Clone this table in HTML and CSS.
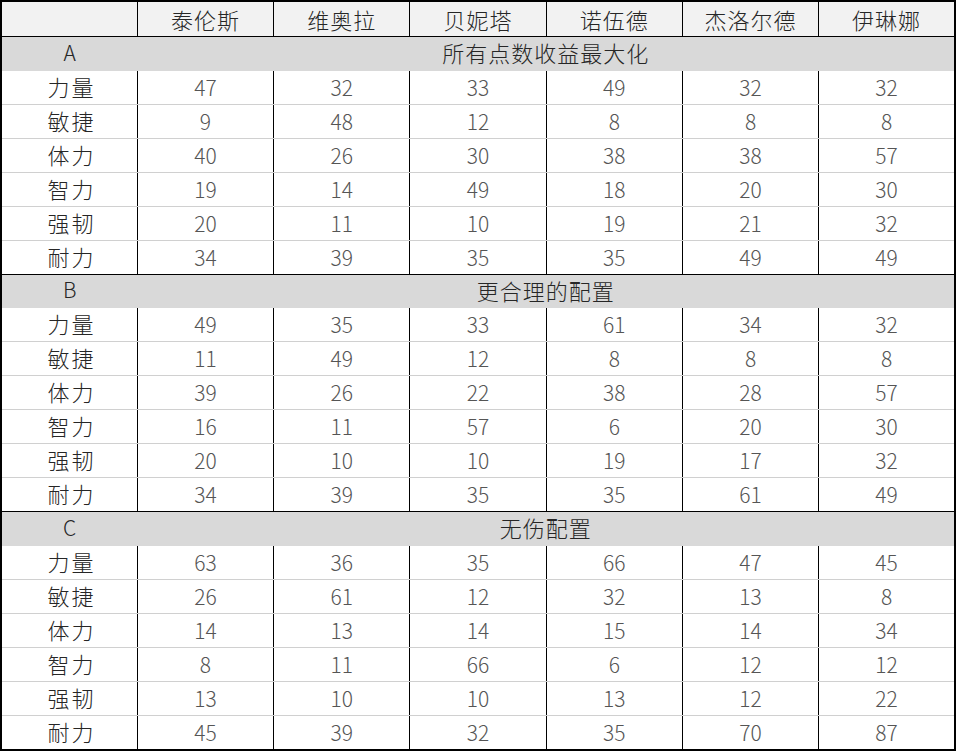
FILE: index.html
```html
<!DOCTYPE html>
<html lang="zh">
<head>
<meta charset="utf-8">
<title>属性配置</title>
<link rel="stylesheet" href="styles.css">
</head>
<body>
<table class="stats">
  <colgroup>
    <col><col><col><col><col><col><col>
  </colgroup>
  <tr class="head">
    <td></td><td>泰伦斯</td><td>维奥拉</td><td>贝妮塔</td><td>诺伍德</td><td>杰洛尔德</td><td>伊琳娜</td>
  </tr>
  <tr class="section"><td class="key">A</td><td colspan="6">所有点数收益最大化</td></tr>
  <tr class="row"><td class="lbl">力量</td><td>47</td><td>32</td><td>33</td><td>49</td><td>32</td><td>32</td></tr>
  <tr class="row"><td class="lbl">敏捷</td><td>9</td><td>48</td><td>12</td><td>8</td><td>8</td><td>8</td></tr>
  <tr class="row"><td class="lbl">体力</td><td>40</td><td>26</td><td>30</td><td>38</td><td>38</td><td>57</td></tr>
  <tr class="row"><td class="lbl">智力</td><td>19</td><td>14</td><td>49</td><td>18</td><td>20</td><td>30</td></tr>
  <tr class="row"><td class="lbl">强韧</td><td>20</td><td>11</td><td>10</td><td>19</td><td>21</td><td>32</td></tr>
  <tr class="row last"><td class="lbl">耐力</td><td>34</td><td>39</td><td>35</td><td>35</td><td>49</td><td>49</td></tr>
  <tr class="section"><td class="key">B</td><td colspan="6">更合理的配置</td></tr>
  <tr class="row"><td class="lbl">力量</td><td>49</td><td>35</td><td>33</td><td>61</td><td>34</td><td>32</td></tr>
  <tr class="row"><td class="lbl">敏捷</td><td>11</td><td>49</td><td>12</td><td>8</td><td>8</td><td>8</td></tr>
  <tr class="row"><td class="lbl">体力</td><td>39</td><td>26</td><td>22</td><td>38</td><td>28</td><td>57</td></tr>
  <tr class="row"><td class="lbl">智力</td><td>16</td><td>11</td><td>57</td><td>6</td><td>20</td><td>30</td></tr>
  <tr class="row"><td class="lbl">强韧</td><td>20</td><td>10</td><td>10</td><td>19</td><td>17</td><td>32</td></tr>
  <tr class="row last"><td class="lbl">耐力</td><td>34</td><td>39</td><td>35</td><td>35</td><td>61</td><td>49</td></tr>
  <tr class="section"><td class="key">C</td><td colspan="6">无伤配置</td></tr>
  <tr class="row"><td class="lbl">力量</td><td>63</td><td>36</td><td>35</td><td>66</td><td>47</td><td>45</td></tr>
  <tr class="row"><td class="lbl">敏捷</td><td>26</td><td>61</td><td>12</td><td>32</td><td>13</td><td>8</td></tr>
  <tr class="row"><td class="lbl">体力</td><td>14</td><td>13</td><td>14</td><td>15</td><td>14</td><td>34</td></tr>
  <tr class="row"><td class="lbl">智力</td><td>8</td><td>11</td><td>66</td><td>6</td><td>12</td><td>12</td></tr>
  <tr class="row"><td class="lbl">强韧</td><td>13</td><td>10</td><td>10</td><td>13</td><td>12</td><td>22</td></tr>
  <tr class="row"><td class="lbl">耐力</td><td>45</td><td>39</td><td>32</td><td>35</td><td>70</td><td>87</td></tr>
</table>
</body>
</html>
```
FILE: styles.css
```css
html, body {
  margin: 0;
  padding: 0;
  background: #ffffff;
}

.stats {
  width: 956px;
  border-collapse: collapse;
  table-layout: fixed;
  border: 2px solid #000000;
  font-family: "Noto Sans CJK SC", "Noto Sans", sans-serif;
  font-size: 22px;
  font-weight: 300;
}

.stats td {
  height: 33px;
  padding: 0;
  text-align: center;
  vertical-align: middle;
  line-height: 1;
}

.head td {
  height: 34px;
  background: #f2f2f2;
  color: #262626;
  letter-spacing: 1px;
  border-right: 1px solid #000000;
  border-bottom: 1px solid #000000;
}

.section td {
  height: 34px;
  padding-bottom: 3px;
  box-sizing: border-box;
  background: #d9d9d9;
  color: #262626;
  letter-spacing: 1px;
  border: none;
}

.section td.key {
  font-size: 21px;
  letter-spacing: 0;
}

.row td {
  color: #555555;
  font-size: 21px;
  border-right: 1px solid #000000;
  border-bottom: 1px solid #d0d0d0;
}

.row td.lbl {
  color: #262626;
  font-size: 22px;
  letter-spacing: 2px;
  padding-bottom: 3px;
  padding-left: 4px;
  box-sizing: border-box;
}

.row.last td {
  border-bottom: 1px solid #000000;
}
```
